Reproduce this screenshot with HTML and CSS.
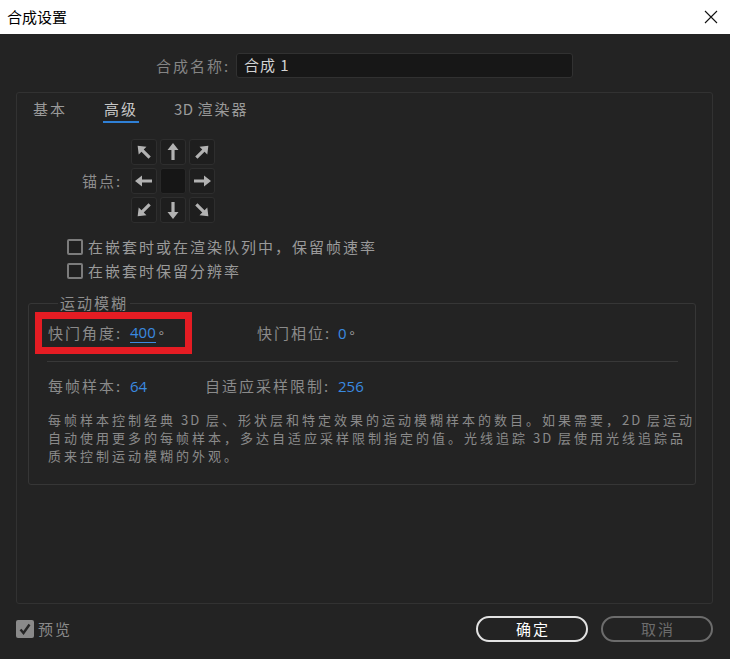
FILE: index.html
```html
<!DOCTYPE html>
<html>
<head>
<meta charset="utf-8">
<link rel="stylesheet" href="styles.css">
</head>
<body>
<div class="titlebar">
  <span class="title">合成设置</span>
  <svg class="close" width="14" height="14" viewBox="0 0 14 14"><path d="M1 1 L13 13 M13 1 L1 13" stroke="#111" stroke-width="1.1" fill="none"/></svg>
</div>
<div class="name-row">
  <span class="name-label">合成名称:</span>
  <div class="name-input">合成 1</div>
</div>
<div class="panel">
  <div class="tabs">
    <span class="tab tab-basic">基本</span>
    <span class="tab tab-adv active">高级</span>
    <span class="tab"><span class="lat">3D </span>渲染器</span>
  </div>
  <div class="anchor-row">
    <span class="anchor-label">锚点:</span>
    <div class="anchor-grid">
      <div class="cell"><svg viewBox="0 0 26 26"><g transform="rotate(-45 13 13)"><path d="M13 4 L18.5 11 L14.6 11 L14.6 21 L11.4 21 L11.4 11 L7.5 11 Z"/></g></svg></div>
      <div class="cell"><svg viewBox="0 0 26 26"><path d="M13 4 L18.5 11 L14.6 11 L14.6 21 L11.4 21 L11.4 11 L7.5 11 Z"/></svg></div>
      <div class="cell"><svg viewBox="0 0 26 26"><g transform="rotate(45 13 13)"><path d="M13 4 L18.5 11 L14.6 11 L14.6 21 L11.4 21 L11.4 11 L7.5 11 Z"/></g></svg></div>
      <div class="cell"><svg viewBox="0 0 26 26"><g transform="rotate(-90 13 13)"><path d="M13 4 L18.5 11 L14.6 11 L14.6 21 L11.4 21 L11.4 11 L7.5 11 Z"/></g></svg></div>
      <div class="cell center"></div>
      <div class="cell"><svg viewBox="0 0 26 26"><g transform="rotate(90 13 13)"><path d="M13 4 L18.5 11 L14.6 11 L14.6 21 L11.4 21 L11.4 11 L7.5 11 Z"/></g></svg></div>
      <div class="cell"><svg viewBox="0 0 26 26"><g transform="rotate(-135 13 13)"><path d="M13 4 L18.5 11 L14.6 11 L14.6 21 L11.4 21 L11.4 11 L7.5 11 Z"/></g></svg></div>
      <div class="cell"><svg viewBox="0 0 26 26"><g transform="rotate(180 13 13)"><path d="M13 4 L18.5 11 L14.6 11 L14.6 21 L11.4 21 L11.4 11 L7.5 11 Z"/></g></svg></div>
      <div class="cell"><svg viewBox="0 0 26 26"><g transform="rotate(135 13 13)"><path d="M13 4 L18.5 11 L14.6 11 L14.6 21 L11.4 21 L11.4 11 L7.5 11 Z"/></g></svg></div>
    </div>
  </div>
  <div class="checks">
    <div class="check-row"><span class="box"></span><span class="check-text">在嵌套时或在渲染队列中，保留帧速率</span></div>
    <div class="check-row"><span class="box"></span><span class="check-text">在嵌套时保留分辨率</span></div>
  </div>
  <fieldset class="blur">
    <legend>运动模糊</legend>
    <div class="row row1">
      <span class="lbl w82">快门角度:</span>
      <span class="val-wrap w127"><span class="val under">400</span><span class="deg">°</span></span>
      <span class="lbl w81">快门相位:</span>
      <span class="val-wrap"><span class="val">0</span><span class="deg">°</span></span>
      <div class="redbox"></div>
    </div>
    <div class="sep"></div>
    <div class="row row2">
      <span class="lbl w82">每帧样本:</span>
      <span class="val-wrap w75"><span class="val">64</span></span>
      <span class="lbl w133">自适应采样限制:</span>
      <span class="val-wrap"><span class="val">256</span></span>
    </div>
    <div class="desc">
      <div>每帧样本控制经典<span class="lat"> 3D </span>层、形状层和特定效果的运动模糊样本的数目。如果需要，<span class="lat">2D </span>层运动</div>
      <div>自动使用更多的每帧样本，多达自适应采样限制指定的值。光线追踪<span class="lat"> 3D </span>层使用光线追踪品</div>
      <div>质来控制运动模糊的外观。</div>
    </div>
  </fieldset>
</div>
<div class="footer">
  <span class="pbox"><svg width="14" height="14" viewBox="0 0 14 14"><path d="M2.5 7.5 L5.5 11 L11.5 2.5" stroke="#262626" stroke-width="2.4" fill="none"/></svg></span>
  <span class="plabel">预览</span>
  <span class="spacer"></span>
  <span class="btn ok">确定</span>
  <span class="btn cancel">取消</span>
</div>
</body>
</html>
```
FILE: styles.css
```css
* { box-sizing: border-box; }
html, body { margin: 0; padding: 0; }
body {
  width: 730px;
  height: 659px;
  overflow: hidden;
  background: #232323;
  font-family: "Noto Sans CJK SC", "Noto Sans", sans-serif;
  font-size: 15px;
  line-height: 20px;
}
.titlebar {
  height: 34px;
  background: #ffffff;
  display: flex;
  align-items: center;
  justify-content: space-between;
  padding: 0 12px 0 7px;
}
.title { color: #000; font-size: 15px; letter-spacing: 0; }
.close { display: block; }

.name-row {
  display: flex;
  align-items: center;
  padding: 19px 0 0 156px;
}
.name-label {
  width: 80px;
  color: #858585;
  letter-spacing: 2px;
}
.name-input {
  width: 337px;
  height: 25px;
  background: #171717;
  border: 1px solid #313131;
  border-radius: 3px;
  color: #d2d2d2;
  padding-left: 7px;
  line-height: 22px;
  letter-spacing: 1px;
}

.panel {
  margin: 14px 17px 0 16px;
  height: 512px;
  border: 1px solid #323232;
  border-radius: 3px;
  padding: 6px 16px 0 11px;
}
.tabs { display: flex; padding-left: 5px; }
.tab {
  letter-spacing: 2px;
  color: #9a9a9a;
  padding-bottom: 2px;
  border-bottom: 2px solid transparent;
}
.tab-basic { margin-right: 36px; }
.tab-adv { margin-right: 35px; padding: 0 1px 2px 1px; }
.tab.active { color: #c8c8c8; border-bottom-color: #2f80d6; }
.lat { letter-spacing: 0.5px; }

.anchor-row {
  display: flex;
  align-items: center;
  margin-top: 16px;
  padding-left: 54px;
}
.anchor-label { width: 49px; color: #8d8d8d; letter-spacing: 2px; }
.anchor-grid {
  display: grid;
  grid-template-columns: repeat(3, 26px);
  grid-auto-rows: 26px;
  gap: 3px;
}
.cell {
  background: #1e1e1e;
  border: 1px solid #2e2e2e;
  border-radius: 3px;
  display: flex;
  align-items: center;
  justify-content: center;
}
.cell svg { width: 26px; height: 26px; fill: #b2b2b2; flex: none; }
.cell.center { background: #161616; border-color: #282828; }

.checks { margin-top: 12px; padding-left: 39px; }
.check-row { display: flex; align-items: center; height: 24px; }
.box {
  width: 16px;
  height: 16px;
  border: 2px solid #7c7c7c;
  border-radius: 2px;
  background: #202020;
  margin-right: 5px;
}
.check-text { color: #9a9a9a; letter-spacing: 2px; }

.blur {
  margin: 10px 0 0 0;
  padding: 0 0 19px 19px;
  border: 1px solid #363636;
  border-radius: 3px;
  min-width: 0;
}
.blur legend {
  margin-left: 10px;
  padding: 0 2px;
  color: #8e8e8e;
  letter-spacing: 2px;
  line-height: 20px;
}
.row { display: flex; align-items: center; height: 20px; }
.row1 { margin-top: 10px; position: relative; }
.row2 { margin-top: 14px; }
.lbl { color: #8a8a8a; letter-spacing: 2px; white-space: nowrap; }
.w82 { width: 82px; }
.w81 { width: 81px; }
.w133 { width: 133px; }
.w127 { width: 127px; }
.w75 { width: 75px; }
.val-wrap { display: flex; align-items: center; }
.val {
  font-family: "Open Sans", "Noto Sans", sans-serif;
  color: #3a8ae0;
  font-size: 15px;
  line-height: 20px;
}
.val.under { border-bottom: 1px solid #3a8ae0; line-height: 19px; }
.deg {
  color: #9a9a9a;
  margin-left: 3px;
  font-size: 14px;
  line-height: 14px;
  padding-top: 5px;
  align-self: center;
}
.redbox {
  position: absolute;
  left: -13px;
  top: -11px;
  width: 157px;
  height: 42px;
  border: 7px solid #e51c23;
}
.sep {
  height: 1px;
  background: #383838;
  margin: 18px 17px 0 -1px;
}
.desc {
  margin-top: 15px;
  color: #8a8a8a;
  font-size: 13px;
  line-height: 18px;
  letter-spacing: 3px;
  white-space: nowrap;
}
.desc .lat { letter-spacing: 2px; }

.footer {
  display: flex;
  align-items: center;
  margin-top: 12px;
  padding: 0 17px 0 16px;
  height: 26px;
}
.pbox {
  width: 18px;
  height: 18px;
  background: #8a8a8a;
  border-radius: 2px;
  display: flex;
  align-items: center;
  justify-content: center;
}
.plabel { margin-left: 4px; color: #8a8a8a; letter-spacing: 2px; }
.spacer { flex: 1; }
.btn {
  width: 112px;
  height: 26px;
  border-radius: 13px;
  border: 2px solid #e2e2e2;
  display: flex;
  align-items: center;
  justify-content: center;
  letter-spacing: 2px;
  padding-left: 2px;
}
.ok { color: #ffffff; }
.cancel { border-color: #6c6c6c; color: #6c6c6c; margin-left: 13px; }
```
